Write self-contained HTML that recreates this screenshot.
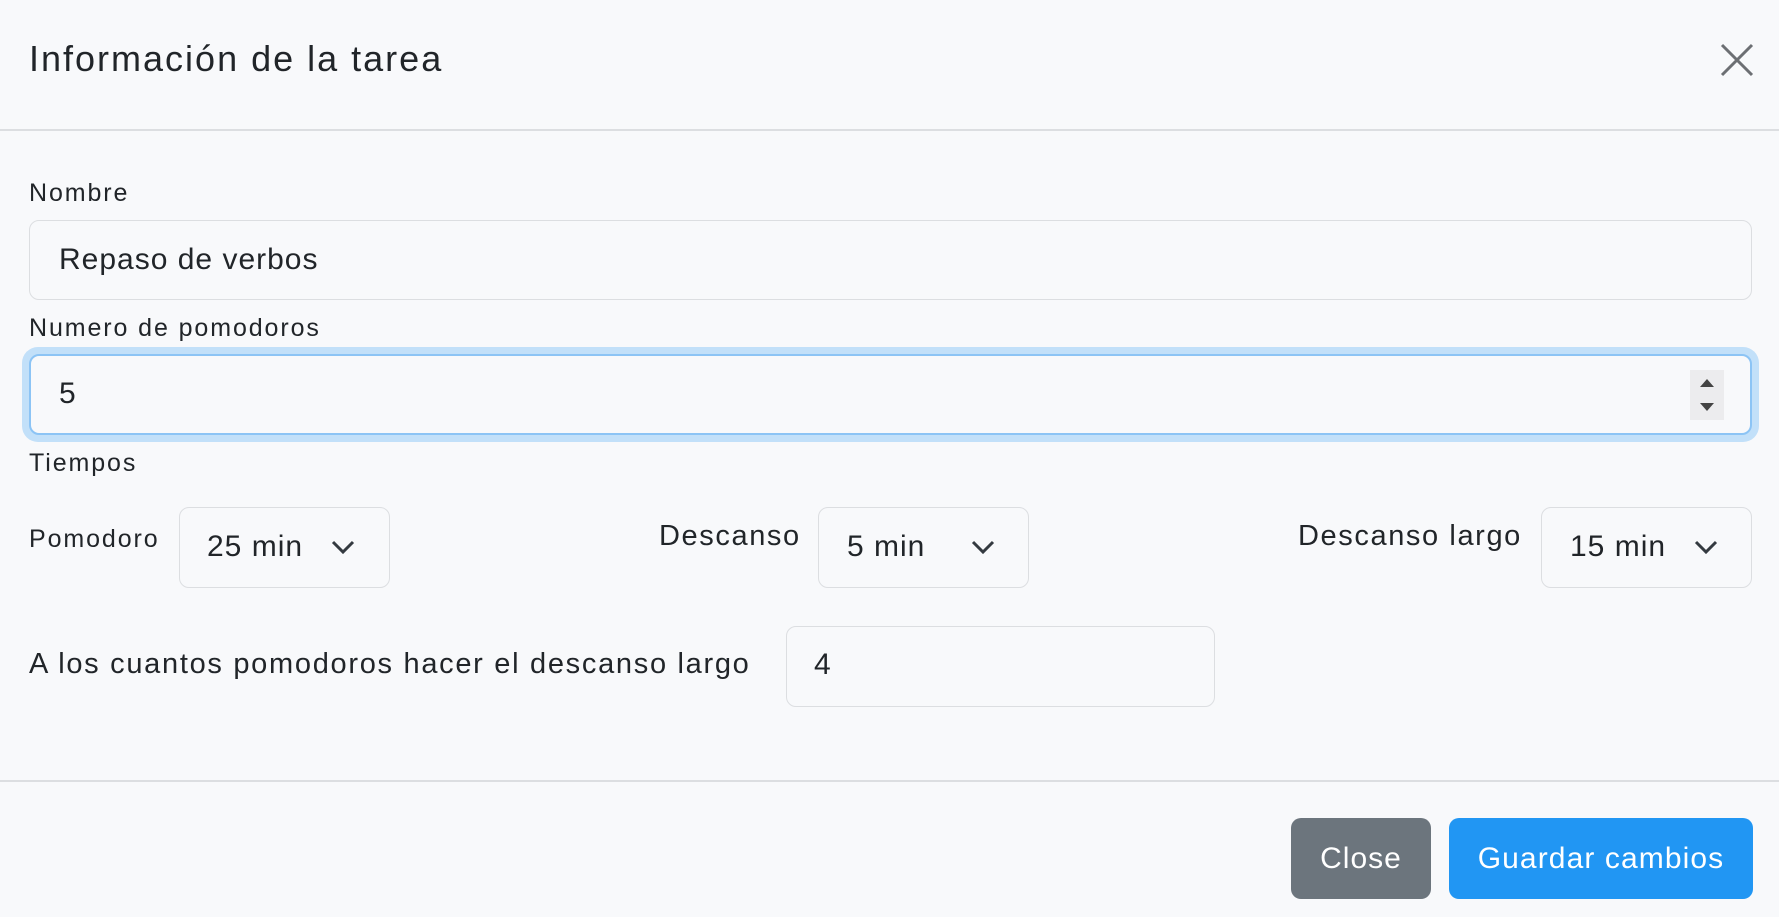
<!DOCTYPE html>
<html><head><meta charset="utf-8"><style>
*{box-sizing:border-box;margin:0;padding:0}
body{width:1779px;height:917px;background:#f8f9fb;font-family:"Liberation Sans",sans-serif;color:#212529;position:relative;overflow:hidden}
.a{position:absolute;white-space:nowrap}
.box{position:absolute;border:1.5px solid #dcdee1;border-radius:10px;background:#f8f9fb}
.lbl{font-size:25px;color:#212529;letter-spacing:1.9px}
.lb2{font-size:29px;letter-spacing:1.6px}
.val{font-size:30px;letter-spacing:1px}
.hr{position:absolute;left:0;width:1779px;height:2px;background:#dcdee1}
.chev{position:absolute;width:24px;height:14px}
</style></head><body>
<div class="a" style="left:29px;top:38px;font-size:36px;letter-spacing:2px">Información de la tarea</div>
<svg class="a" style="left:1719px;top:42px" width="36" height="36" viewBox="0 0 36 36"><path d="M3 3L33 33M33 3L3 33" stroke="#6c6f73" stroke-width="3"/></svg>
<div class="hr" style="top:129px"></div>

<div class="a lbl" style="left:29px;top:179px">Nombre</div>
<div class="box" style="left:29px;top:220px;width:1723px;height:80px"></div>
<div class="a val" style="left:59px;top:243px">Repaso de verbos</div>

<div class="a lbl" style="left:29px;top:314px">Numero de pomodoros</div>
<div class="a" style="left:22px;top:347px;width:1737px;height:95px;border-radius:16px;background:#c2e0f9"></div>
<div class="box" style="left:29px;top:354px;width:1723px;height:81px;border:2px solid #8cc4f5;background:#f8f9fb"></div>
<div class="a val" style="left:59px;top:377px">5</div>
<div class="a" style="left:1690px;top:370px;width:34px;height:50px;background:#ececee"></div>
<svg class="a" style="left:1697px;top:376px" width="20" height="38" viewBox="0 0 20 38"><path d="M3 11L10 3L17 11Z M3 27L17 27L10 35Z" fill="#444"/></svg>

<div class="a lbl" style="left:29px;top:449px">Tiempos</div>

<div class="a lbl" style="left:29px;top:525px">Pomodoro</div>
<div class="box" style="left:179px;top:507px;width:211px;height:81px"></div>
<div class="a val" style="left:207px;top:530px">25 min</div>
<svg class="chev" style="left:331px;top:540px" viewBox="0 0 24 14"><path d="M2 2L12 12L22 2" fill="none" stroke="#343a40" stroke-width="3"/></svg>

<div class="a lb2" style="left:659px;top:520px">Descanso</div>
<div class="box" style="left:818px;top:507px;width:211px;height:81px"></div>
<div class="a val" style="left:847px;top:530px">5 min</div>
<svg class="chev" style="left:971px;top:540px" viewBox="0 0 24 14"><path d="M2 2L12 12L22 2" fill="none" stroke="#343a40" stroke-width="3"/></svg>

<div class="a lb2" style="left:1298px;top:520px">Descanso largo</div>
<div class="box" style="left:1541px;top:507px;width:211px;height:81px"></div>
<div class="a val" style="left:1570px;top:530px">15 min</div>
<svg class="chev" style="left:1694px;top:540px" viewBox="0 0 24 14"><path d="M2 2L12 12L22 2" fill="none" stroke="#343a40" stroke-width="3"/></svg>

<div class="a lb2" style="left:29px;top:648px;letter-spacing:1.7px">A los cuantos pomodoros hacer el descanso largo</div>
<div class="box" style="left:786px;top:626px;width:429px;height:81px"></div>
<div class="a val" style="left:814px;top:648px">4</div>

<div class="hr" style="top:780px"></div>
<div class="a" style="left:1291px;top:818px;width:140px;height:81px;background:#6c757d;border-radius:10px;color:#fff;font-size:30px;letter-spacing:1px;text-align:center;line-height:81px">Close</div>
<div class="a" style="left:1449px;top:818px;width:304px;height:81px;background:#2196f3;border-radius:10px;color:#fff;font-size:30px;letter-spacing:1.1px;text-align:center;line-height:81px">Guardar cambios</div>
</body></html>
